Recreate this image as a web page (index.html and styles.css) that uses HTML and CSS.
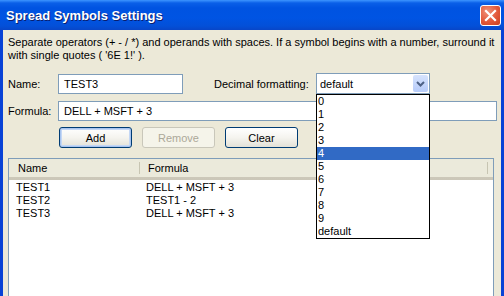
FILE: index.html
```html
<!DOCTYPE html>
<html lang="en">
<head>
    <meta charset="UTF-8">
    <title>Spread Symbols Settings</title>
    <link rel="stylesheet" href="styles.css">
</head>
<body>
    <div class="window">
        <!-- Title bar -->
        <div class="titlebar">
            <span class="title">Spread Symbols Settings</span>
            <button class="close-btn" aria-label="Close">
                <svg width="13" height="13" viewBox="0 0 13 13">
                    <path d="M2 2 L11 11 M11 2 L2 11" stroke="#fff" stroke-width="2.2" stroke-linecap="square"/>
                </svg>
            </button>
        </div>

        <div class="content">
            <p class="hint">Separate operators (+ - / *) and operands with spaces. If a symbol begins with a number, surround it with single quotes ( '6E 1!' ).</p>

            <!-- Name + decimal formatting -->
            <div class="form-row">
                <label class="field-label">Name:</label>
                <div class="text-input name-input">TEST3</div>
                <label class="decimal-label">Decimal formatting:</label>
                <div class="combo">
                    <span class="combo-value">default</span>
                    <span class="combo-arrow">
                        <svg width="9" height="6" viewBox="0 0 9 6">
                            <path d="M1 1 L4.5 4.5 L8 1" fill="none" stroke="#4d6185" stroke-width="2"/>
                        </svg>
                    </span>
                    <ul class="combo-list">
                        <li>0</li>
                        <li>1</li>
                        <li>2</li>
                        <li>3</li>
                        <li class="selected">4</li>
                        <li>5</li>
                        <li>6</li>
                        <li>7</li>
                        <li>8</li>
                        <li>9</li>
                        <li>default</li>
                    </ul>
                </div>
            </div>

            <!-- Formula -->
            <div class="form-row formula-row">
                <label class="field-label">Formula:</label>
                <div class="text-input formula-input">DELL + MSFT + 3</div>
            </div>

            <!-- Buttons -->
            <div class="button-row">
                <button class="xp-btn default-btn">Add</button>
                <button class="xp-btn" disabled>Remove</button>
                <button class="xp-btn">Clear</button>
            </div>

            <!-- Symbols list -->
            <div class="list-box">
                <div class="list-header">
                    <div class="col-name">Name</div>
                    <div class="col-formula">Formula</div>
                </div>
                <div class="list-body">
                    <div class="list-row">
                        <div class="col-name">TEST1</div>
                        <div class="col-formula">DELL + MSFT + 3</div>
                    </div>
                    <div class="list-row">
                        <div class="col-name">TEST2</div>
                        <div class="col-formula">TEST1 - 2</div>
                    </div>
                    <div class="list-row">
                        <div class="col-name">TEST3</div>
                        <div class="col-formula">DELL + MSFT + 3</div>
                    </div>
                </div>
            </div>
        </div>
    </div>
</body>
</html>
```

FILE: styles.css
```css
/* General */
body {
    margin: 0;
    width: 504px;
    height: 296px;
    overflow: hidden;
    font-family: 'Liberation Sans', Arial, sans-serif;
    font-size: 11px;
    color: #000;
}

.window {
    height: 296px;
    display: flex;
    flex-direction: column;
    background: #0842d6;
    padding: 0 3px;
}

/* Title bar */
.titlebar {
    height: 30px;
    flex: none;
    margin: 0 -3px;
    padding: 0 3px 0 6px;
    display: flex;
    align-items: center;
    justify-content: space-between;
    background: linear-gradient(to bottom, #3d95ff 0px, #0a5fe8 3px, #0053e1 8px, #0054e3 18px, #0350d8 26px, #0846c8 30px);
}

.title {
    color: #fff;
    font-family: 'Liberation Sans', Arial, sans-serif;
    font-weight: bold;
    font-size: 13px;
    text-shadow: 1px 1px 0 #0a1e6e;
    padding-top: 1px;
}

.close-btn {
    width: 21px;
    height: 21px;
    padding: 0;
    border: 1px solid #fff;
    border-radius: 3px;
    background: radial-gradient(circle at 35% 30%, #f0927a 0%, #e2583a 55%, #c9401f 100%);
    display: flex;
    align-items: center;
    justify-content: center;
}

/* Dialog body */
.content {
    flex: 1;
    background: #ece9d8;
    padding: 0 4px 0 5px;
    display: flex;
    flex-direction: column;
}

.hint {
    margin: 6px 0 0;
    line-height: 13px;
}

.form-row {
    display: flex;
    align-items: center;
    margin-top: 11px;
    height: 21px;
}

.formula-row {
    margin-top: 6px;
}

.field-label {
    width: 50px;
}

.text-input {
    height: 18px;
    line-height: 18px;
    border: 1px solid #7f9db9;
    background: #fff;
    padding: 0 5px;
    box-sizing: content-box;
}

.name-input {
    width: 113px;
}

.formula-input {
    width: 427px;
}

.decimal-label {
    margin-left: 31px;
    width: 102px;
}

/* Combo box */
.combo {
    position: relative;
    width: 112px;
    height: 19px;
    border: 1px solid #7f9db9;
    background: #fff;
    display: flex;
    align-items: center;
    justify-content: space-between;
}

.combo-value {
    padding-left: 3px;
}

.combo-arrow {
    width: 15px;
    height: 17px;
    margin-right: 1px;
    border-radius: 2px;
    background: linear-gradient(to bottom, #d6e3fd, #b6cbf9);
    display: flex;
    align-items: center;
    justify-content: center;
}

.combo-list {
    position: absolute;
    top: 20px;
    left: -1px;
    width: 112px;
    margin: 0;
    padding: 0;
    list-style: none;
    background: #fff;
    border: 1px solid #000;
    z-index: 10;
}

.combo-list li {
    height: 13px;
    line-height: 13px;
    padding-left: 1px;
}

.combo-list .selected {
    background: #316ac5;
    color: #fff;
}

/* Buttons */
.button-row {
    display: flex;
    gap: 10px;
    margin: 6px 0 0 51px;
}

.xp-btn {
    width: 73px;
    height: 21px;
    padding: 0;
    font-family: inherit;
    font-size: 11px;
    color: #000;
    border: 1px solid #003c74;
    border-radius: 3px;
    background: linear-gradient(to bottom, #ffffff 0%, #f5f4ef 50%, #e3e1d7 100%);
}

.default-btn {
    box-shadow: inset 0 0 0 1px #a8c4ef, inset 0 0 0 2px #c4d7f5;
}

.xp-btn:disabled {
    color: #aca899;
    border-color: #c9c7ba;
    background: #f5f4ea;
}

/* Symbols list */
.list-box {
    flex: 1;
    margin-top: 10px;
    margin-right: 3px;
    border: 1px solid #7f9db9;
    border-bottom: none;
    background: #fff;
}

.list-header {
    display: flex;
    height: 18px;
    align-items: center;
    background: #ebeadb;
    border-bottom: 3px solid;
    border-image: linear-gradient(to bottom, #e2e1d1, #d6d3c1, #cbc7b8) 1;
}

.list-header .col-name {
    width: 121px;
    padding-left: 9px;
    border-right: 1px solid #c7c5b2;
    height: 12px;
    line-height: 12px;
}

.list-header .col-formula {
    width: 339px;
    padding-left: 8px;
    border-right: 1px solid #c7c5b2;
    height: 12px;
    line-height: 12px;
}

.list-body {
    padding-top: 1px;
}

.list-row {
    display: flex;
    height: 13px;
    line-height: 13px;
}

.list-row .col-name {
    width: 130px;
    padding-left: 7px;
}
```
